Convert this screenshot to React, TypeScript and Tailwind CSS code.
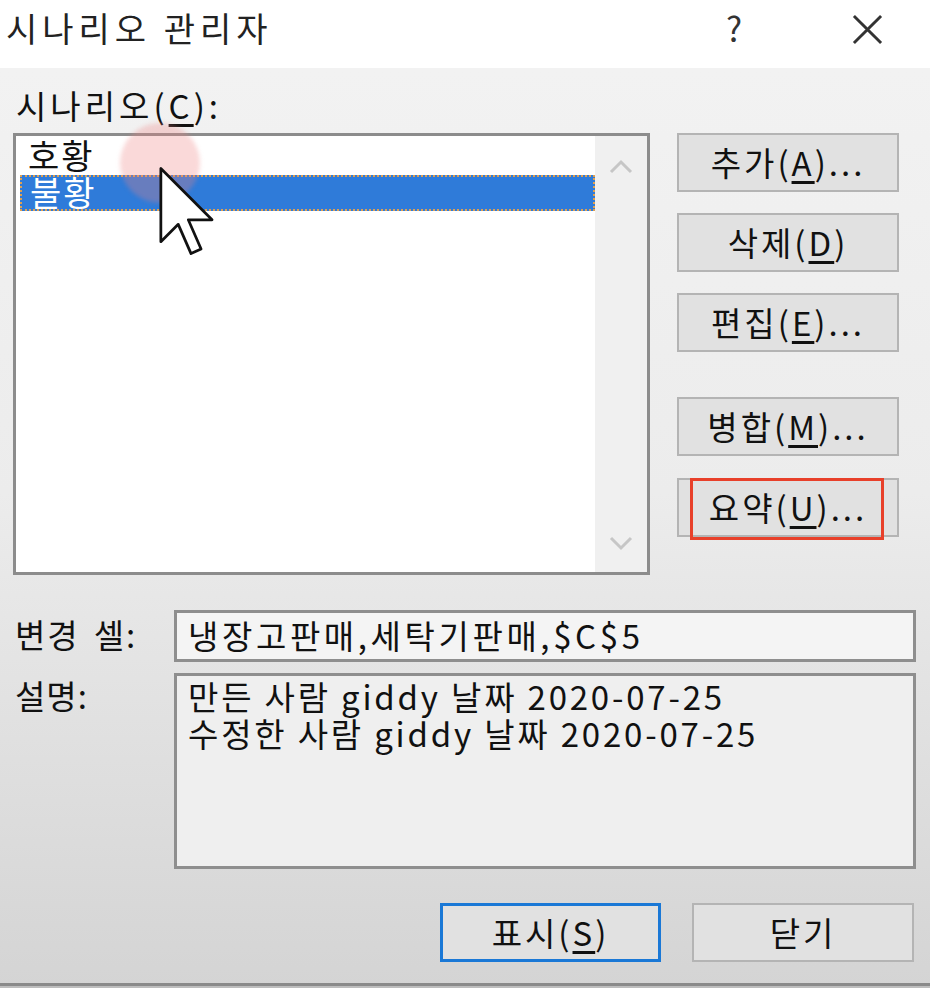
import React from "react";

const font = { fontFamily: '"Noto Sans CJK KR", "Noto Sans", sans-serif' };

function Btn({ children, className = "" }: { children: React.ReactNode; className?: string }) {
  return (
    <div
      className={`h-[59px] bg-[#e1e1e1] border-2 border-[#b4b4b4] flex items-center justify-center text-[33px] leading-none tracking-[3px] text-[#111] ${className}`}
    >
      {children}
    </div>
  );
}

export default function App() {
  return (
    <div
      className="relative w-[930px] h-[988px] flex flex-col bg-gradient-to-b from-[#f3f3f3] via-[#ececec] to-[#d4d4d4] overflow-hidden select-none"
      style={font}
    >
      {/* Title bar */}
      <div className="h-[68px] bg-white flex items-start pt-[6px] shrink-0">
        <span className="ml-[6px] text-[34px] leading-[44px] tracking-[5px] text-[#222]">시나리오 관리자</span>
        <span className="ml-auto text-[34px] leading-[44px] text-[#333]">?</span>
        <svg className="ml-[110px] mr-[47px] mt-[8px]" width="31" height="31" viewBox="0 0 32 32">
          <path d="M2 2L30 30M30 2L2 30" stroke="#333" strokeWidth="3" />
        </svg>
      </div>

      {/* Scenario label */}
      <div className="mt-[17px] ml-[16px] h-[40px] leading-[40px] text-[33px] tracking-[4px] text-[#111]">
        시나리오(<span className="underline underline-offset-[5px]">C</span>):
      </div>

      {/* List + buttons */}
      <div className="mt-[8px] flex">
        <div className="ml-[13px] w-[637px] h-[442px] border-[3px] border-[#8c8c8c] bg-white flex">
          <div className="flex-1 flex flex-col pt-[1px] pl-[4px]">
            <div className="h-[38px] leading-[36px] pl-[8px] text-[34px] tracking-[2px] text-[#111]">호황</div>
            <div className="h-[36px] leading-[30px] pl-[8px] text-[34px] tracking-[2px] text-white bg-[#2f7bd9] border-2 border-dotted border-[#e0a050]">
              불황
            </div>
          </div>
          <div className="w-[52px] bg-[#f0f0f0] flex flex-col items-center justify-between pt-[22px] pb-[20px]">
            <svg width="24" height="16" viewBox="0 0 24 16">
              <path d="M2 14L12 4L22 14" fill="none" stroke="#c6c6c6" strokeWidth="3" />
            </svg>
            <svg width="24" height="16" viewBox="0 0 24 16">
              <path d="M2 2L12 12L22 2" fill="none" stroke="#c6c6c6" strokeWidth="3" />
            </svg>
          </div>
        </div>

        <div className="ml-[27px] w-[222px] flex flex-col">
          <Btn>추가(<span className="underline underline-offset-[5px]">A</span>)...</Btn>
          <Btn className="mt-[21px]">삭제(<span className="underline underline-offset-[5px]">D</span>)</Btn>
          <Btn className="mt-[21px]">편집(<span className="underline underline-offset-[5px]">E</span>)...</Btn>
          <Btn className="mt-[45px]">병합(<span className="underline underline-offset-[5px]">M</span>)...</Btn>
          <Btn className="mt-[22px]">요약(<span className="underline underline-offset-[5px]">U</span>)...</Btn>
        </div>
      </div>

      {/* Changing cells */}
      <div className="mt-[35px] flex">
        <div className="ml-[15px] w-[159px] pt-[4px] text-[33px] leading-[40px] tracking-[2px] text-[#111] flex">
          <span>변경</span>
          <span className="w-[14px]" />
          <span>셀:</span>
        </div>
        <div className="w-[742px] h-[52px] border-[3px] border-[#8e8e8e] bg-[#f4f4f4] pl-[11px] text-[33px] leading-[44px] text-[#111] tracking-[3.6px]">
          냉장고판매,세탁기판매,$C$5
        </div>
      </div>

      {/* Description */}
      <div className="mt-[11px] flex">
        <div className="ml-[15px] w-[159px] pt-[2px] text-[33px] leading-[40px] tracking-[1px] text-[#111]">설명:</div>
        <div className="w-[742px] h-[196px] border-[3px] border-[#8e8e8e] bg-[#efefef] pl-[11px] pt-[2px] text-[33px] leading-[37px] text-[#111] tracking-[2.8px]">
          <div>만든 사람 giddy 날짜 2020-07-25</div>
          <div>수정한 사람 giddy 날짜 2020-07-25</div>
        </div>
      </div>

      {/* Bottom buttons */}
      <div className="mt-[34px] flex justify-end pr-[16px] gap-[31px]">
        <div className="w-[221px] h-[59px] bg-[#e1e1e1] border-[3px] border-[#1a78d6] flex items-center justify-center text-[33px] leading-none tracking-[3px] text-[#111]">
          표시(<span className="underline underline-offset-[5px]">S</span>)
        </div>
        <Btn className="w-[222px]">닫기</Btn>
      </div>

      <div className="mt-auto h-[5px] border-t-[3px] border-[#8a8a8a] bg-[#bdbdbd]" />

      {/* Annotation box over 요약 */}
      <div className="absolute left-[690px] top-[478px] w-[194px] h-[62px] border-[3px] border-[#e8402a]" />

      {/* Click highlight + cursor */}
      <div className="absolute left-[120px] top-[123px] w-[80px] h-[80px] rounded-full bg-[#f08080]/30 blur-[2px]" />
      <svg className="absolute left-[156px] top-[164px]" width="60" height="96" viewBox="0 0 13 21">
        <path
          d="M1 1L1 17L4.8 13.2L7.6 19.6L9.8 18.6L7 12.2L12.2 12.2Z"
          fill="white"
          stroke="#111"
          strokeWidth="0.6"
          strokeLinejoin="round"
        />
      </svg>
    </div>
  );
}
